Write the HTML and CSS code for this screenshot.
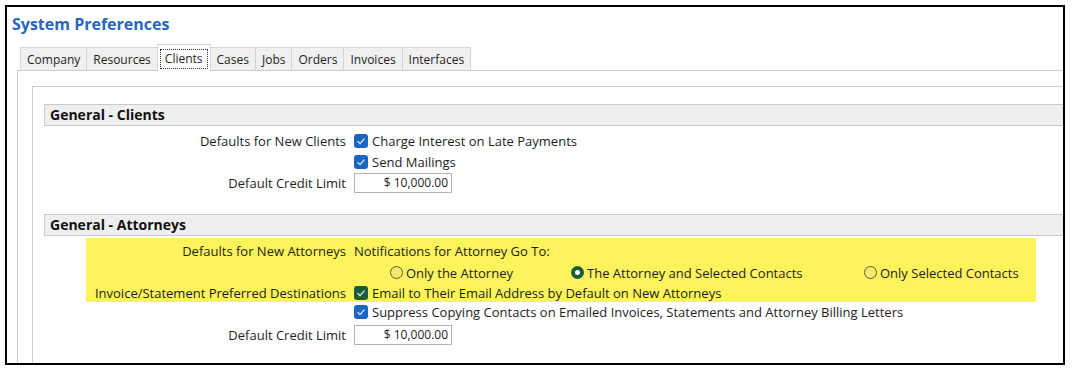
FILE: index.html
```html
<!DOCTYPE html>
<html lang="en">
<head>
  <meta charset="UTF-8">
  <title>System Preferences</title>
  <link rel="stylesheet" href="styles.css">
</head>
<body>
  <div class="window">
    <h1 class="title">System Preferences</h1>

    <!-- tab strip -->
    <div class="tabs">
      <div class="tab">Company</div>
      <div class="tab">Resources</div>
      <div class="tab active"><span class="focus">Clients</span></div>
      <div class="tab">Cases</div>
      <div class="tab">Jobs</div>
      <div class="tab">Orders</div>
      <div class="tab">Invoices</div>
      <div class="tab">Interfaces</div>
    </div>

    <div class="panel">
      <div class="group">

        <!-- General - Clients -->
        <section class="section">
          <div class="section-head">General - Clients</div>
          <div class="rows">
            <div class="row">
              <div class="label">Defaults for New Clients</div>
              <label class="ctrl">
                <span class="check"><svg viewBox="0 0 14 14"><polyline points="3.6,7.2 6,9.6 10.4,4.6"/></svg></span>
                Charge Interest on Late Payments
              </label>
            </div>
            <div class="row">
              <div class="label"></div>
              <label class="ctrl">
                <span class="check"><svg viewBox="0 0 14 14"><polyline points="3.6,7.2 6,9.6 10.4,4.6"/></svg></span>
                Send Mailings
              </label>
            </div>
            <div class="row">
              <div class="label">Default Credit Limit</div>
              <div class="ctrl"><div class="money">$ 10,000.00</div></div>
            </div>
          </div>
        </section>

        <!-- General - Attorneys -->
        <section class="section second">
          <div class="section-head">General - Attorneys</div>
          <div class="highlight">
            <div class="row first">
              <div class="label">Defaults for New Attorneys</div>
              <div class="ctrl">Notifications for Attorney Go To:</div>
            </div>
            <div class="row radio-row">
              <div class="label"></div>
              <div class="radios">
                <label class="radio-opt"><span class="radio"></span>Only the Attorney</label>
                <label class="radio-opt"><span class="radio on"></span>The Attorney and Selected Contacts</label>
                <label class="radio-opt"><span class="radio"></span>Only Selected Contacts</label>
              </div>
            </div>
            <div class="row last">
              <div class="label">Invoice/Statement Preferred Destinations</div>
              <label class="ctrl">
                <span class="check green"><svg viewBox="0 0 14 14"><polyline points="3.6,7.2 6,9.6 10.4,4.6"/></svg></span>
                Email to Their Email Address by Default on New Attorneys
              </label>
            </div>
          </div>
          <div class="rows">
            <div class="row suppress">
              <div class="label"></div>
              <label class="ctrl">
                <span class="check"><svg viewBox="0 0 14 14"><polyline points="3.6,7.2 6,9.6 10.4,4.6"/></svg></span>
                Suppress Copying Contacts on Emailed Invoices, Statements and Attorney Billing Letters
              </label>
            </div>
            <div class="row credit">
              <div class="label">Default Credit Limit</div>
              <div class="ctrl"><div class="money">$ 10,000.00</div></div>
            </div>
          </div>
        </section>

      </div>
    </div>
  </div>
</body>
</html>
```

FILE: styles.css
```css
body {
  margin: 0;
  background: #fff;
  font-family: "Open Sans", "Segoe UI", sans-serif;
  font-size: 13px;
  color: #1e1e1e;
}
.window {
  margin: 5px;
  width: 1056px;
  height: 356px;
  border: 2px solid #000;
  overflow: hidden;
  background: #fff;
}
.title {
  margin: 7px 0 10px 5px;
  font-size: 16px;
  line-height: 20px;
  font-weight: bold;
  color: #2767bf;
}

/* tabs */
.tabs {
  display: flex;
  align-items: flex-end;
  height: 26px;
  margin-left: 13px;
}
.tab {
  box-sizing: border-box;
  height: 23px;
  padding: 1px 6px 0;
  border: 1px solid #d4d4d4;
  border-bottom: none;
  border-right: none;
  background: #f0f0f0;
  font-size: 12px;
  line-height: 22px;
}
.tab:last-child {
  border-right: 1px solid #d4d4d4;
}
.tab.active {
  position: relative;
  z-index: 1;
  height: 27px;
  margin-bottom: -1px;
  padding: 4px 2px 0;
  background: #fff;
  border-right: 1px solid #d4d4d4;
}
.tab.active + .tab {
  border-left: none;
}
.focus {
  display: block;
  border: 1px dotted #333;
  line-height: 18px;
  padding: 0 4px;
}

/* panel + group box */
.panel {
  margin: 0 -60px 0 10px;
  height: 400px;
  padding: 15px 0 0 14px;
  border: 1px solid #cdcdcd;
}
.group {
  height: 400px;
  padding: 17px 0 0 11px;
  border: 1px solid #cdcdcd;
}
.section-head {
  height: 20px;
  padding-left: 5px;
  border: 1px solid #cacaca;
  background: #efefef;
  font-size: 14px;
  font-weight: bold;
  line-height: 20px;
  color: #111;
}
.section.second {
  margin-top: 21px;
}
.rows {
  margin-top: 4px;
}
.section.second .rows {
  margin-top: 0;
}

/* form rows */
.row {
  display: grid;
  grid-template-columns: 302px 1fr;
  column-gap: 8px;
  align-items: center;
  height: 21px;
}
.label {
  text-align: right;
  white-space: nowrap;
}
.ctrl {
  display: flex;
  align-items: center;
  gap: 4px;
  white-space: nowrap;
}
.check {
  display: inline-flex;
  width: 14px;
  height: 14px;
  border-radius: 3px;
  background: #1a66c2;
}
.check.green {
  background: #1b5d3a;
}
.check svg {
  width: 14px;
  height: 14px;
  fill: none;
  stroke: #dfe9f7;
  stroke-width: 1.3;
}
.money {
  box-sizing: border-box;
  width: 98px;
  height: 20px;
  padding-right: 3px;
  border: 1px solid #b4b4b4;
  font-size: 12px;
  text-align: right;
  line-height: 18px;
}

/* highlighted block */
.highlight {
  margin: 2px 0 0 42px;
  width: 950px;
  padding-top: 2px;
  background: #fdf35c;
}
.highlight .row {
  grid-template-columns: 260px 1fr;
}
.highlight .row.first {
  height: 22px;
}
.highlight .row.last {
  height: 19px;
}
.radios {
  display: grid;
  grid-template-columns: 181px 293px auto;
  padding-left: 36px;
}
.radio-opt {
  display: flex;
  align-items: center;
  gap: 3px;
  white-space: nowrap;
}
.radio {
  box-sizing: border-box;
  width: 13px;
  height: 13px;
  border: 1px solid #5c5a3c;
  border-radius: 50%;
  background: #f4ea6a;
}
.radio.on {
  border: 4px solid #1b5d3a;
  background: #fff;
}
.row.suppress {
  height: 20px;
}
.row.credit {
  height: 22px;
  margin-top: 2px;
}
```
